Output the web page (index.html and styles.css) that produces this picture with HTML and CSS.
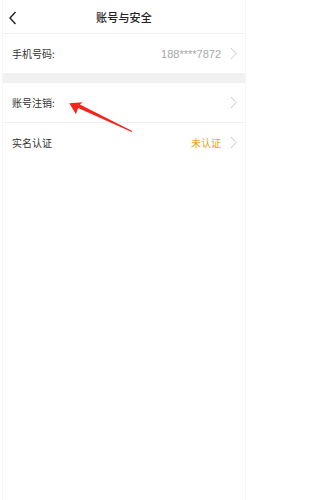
FILE: index.html
```html
<!DOCTYPE html>
<html lang="zh">
<head>
<meta charset="utf-8">
<link rel="stylesheet" href="styles.css">
</head>
<body>
<div class="page">
  <header class="nav">
    <svg class="back" width="10" height="14" viewBox="0 0 10 14"><path d="M7.5 1 L2 7 L7.5 13" fill="none" stroke="#222" stroke-width="1.4"/></svg>
    <div class="title">账号与安全</div>
  </header>
  <div class="row">
    <span class="label">手机号码:</span>
    <span class="value">188****7872</span>
    <svg class="chev" width="7" height="13" viewBox="0 0 7 13"><path d="M1 1 L6 6.5 L1 12" fill="none" stroke="#c8c8c8" stroke-width="1"/></svg>
  </div>
  <div class="gap"></div>
  <div class="row sep">
    <span class="label">账号注销:</span>
    <svg class="chev" width="7" height="13" viewBox="0 0 7 13"><path d="M1 1 L6 6.5 L1 12" fill="none" stroke="#c8c8c8" stroke-width="1"/></svg>
  </div>
  <div class="row">
    <span class="label">实名认证</span>
    <span class="value warn">未认证</span>
    <svg class="chev" width="7" height="13" viewBox="0 0 7 13"><path d="M1 1 L6 6.5 L1 12" fill="none" stroke="#c8c8c8" stroke-width="1"/></svg>
  </div>
  <svg class="arrow" width="248" height="500" viewBox="0 0 248 500">
    <polygon points="69.3,103.3 82.7,102.3 79.9,104.4 132.2,130.9 131.7,131.9 78.1,107.9 76,114.3" fill="#f4261c"/>
  </svg>
</div>
</body>
</html>
```
FILE: styles.css
```css
html, body {
  margin: 0;
  padding: 0;
  background: #fff;
}
body {
  font-family: "Noto Sans CJK SC", "Liberation Sans", sans-serif;
  color: #333;
}
.page {
  position: relative;
  width: 248px;
  height: 500px;
  box-sizing: border-box;
  padding: 0 2px 0 2px;
}
.page::before, .page::after {
  content: "";
  position: absolute;
  top: 0;
  bottom: 0;
  width: 1px;
  background: #f6f6f6;
}
.page::before { left: 2px; }
.page::after { right: 2px; }
.nav {
  height: 33px;
  display: flex;
  align-items: center;
  justify-content: center;
  position: relative;
  border-bottom: 1px solid #f0f0f0;
}
.back {
  position: absolute;
  left: 6px;
  top: 11px;
}
.title {
  font-size: 11px;
  font-weight: 500;
  color: #222;
  letter-spacing: 0.2px;
}
.row {
  height: 39px;
  display: flex;
  align-items: center;
  padding: 0 9px 0 10px;
}
.label {
  font-size: 10px;
  color: #333;
  flex: 1;
}
.value {
  font-family: "Liberation Sans", "Noto Sans CJK SC", sans-serif;
  font-size: 11px;
  color: #a8a8a8;
  margin-right: 9px;
}
.value.warn {
  font-family: "Noto Sans CJK SC", sans-serif;
  font-size: 10px;
  color: #eda21f;
}
.chev { display: block; }
.gap {
  height: 10px;
  background: #f1f1f1;
}
.sep {
  border-bottom: 1px solid #f2f2f2;
}
.arrow {
  position: absolute;
  left: 0;
  top: 0;
  pointer-events: none;
}
```
